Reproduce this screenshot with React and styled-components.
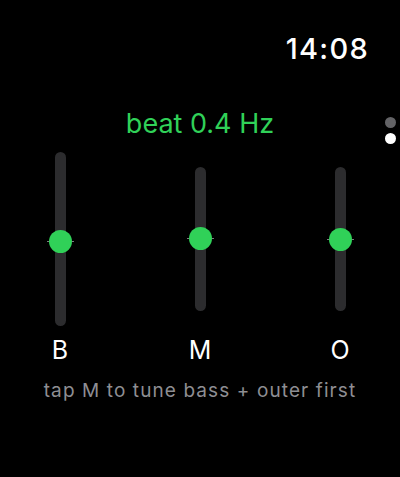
import React from "react";
import styled, { createGlobalStyle } from "styled-components";

const Global = createGlobalStyle`
  html, body {
    margin: 0;
    padding: 0;
    background: #000000;
  }
  body {
    font-family: "Inter", "Roboto", sans-serif;
    -webkit-font-smoothing: antialiased;
  }
`;

const Screen = styled.div`
  position: relative;
  width: 400px;
  height: 477px;
  background: #000000;
  overflow: hidden;
  display: flex;
  flex-direction: column;
`;

const StatusBar = styled.div`
  display: flex;
  justify-content: flex-end;
  padding: 32px 31px 0 0;
  height: 40px;
`;

const Time = styled.div`
  font-size: 29px;
  font-weight: 500;
  line-height: 34px;
  color: #ffffff;
  letter-spacing: 1.3px;
`;

const Title = styled.div`
  margin-top: 37px;
  text-align: center;
  font-size: 27px;
  line-height: 30px;
  color: #30d158;
`;

const PageDots = styled.div`
  position: absolute;
  right: 4px;
  top: 117px;
  display: flex;
  flex-direction: column;
  gap: 5px;
`;

const Dot = styled.span`
  width: 11px;
  height: 11px;
  border-radius: 50%;
  background: ${(p) => (p.$active ? "#ffffff" : "#636366")};
`;

const Sliders = styled.div`
  margin-top: 13px;
  display: flex;
  justify-content: space-between;
  padding: 0 40px;
`;

const Column = styled.div`
  width: 40px;
  display: flex;
  flex-direction: column;
  align-items: center;
`;

const TrackArea = styled.div`
  height: 174px;
  display: flex;
  align-items: center;
  justify-content: center;
`;

const Track = styled.div`
  position: relative;
  width: 11px;
  height: ${(p) => p.$height}px;
  border-radius: 6px;
  background: #2c2c2e;
`;

const Tick = styled.div`
  position: absolute;
  left: 50%;
  width: 27px;
  height: 1px;
  margin-left: -13.5px;
  background: #7c7c80;
`;

const Thumb = styled.div`
  position: absolute;
  left: 50%;
  width: 23px;
  height: 23px;
  margin: -11.5px 0 0 -11.5px;
  border-radius: 50%;
  background: #30d158;
`;

const Label = styled.div`
  margin-top: 10px;
  font-size: 25px;
  line-height: 28px;
  color: #ffffff;
`;

const Hint = styled.div`
  margin-top: 16px;
  text-align: center;
  font-size: 19px;
  line-height: 22px;
  color: #8e8e93;
  letter-spacing: 1.1px;
`;

const sliders = [
  { label: "B", height: 174, thumb: 89 },
  { label: "M", height: 144, thumb: 71 },
  { label: "O", height: 144, thumb: 72 },
];

export default function App() {
  return (
    <Screen>
      <Global />
      <StatusBar>
        <Time>14:08</Time>
      </StatusBar>
      <Title>beat 0.4 Hz</Title>
      <PageDots>
        <Dot />
        <Dot $active />
      </PageDots>
      <Sliders>
        {sliders.map((s) => (
          <Column key={s.label}>
            <TrackArea>
              <Track $height={s.height}>
                <Tick style={{ top: s.thumb }} />
                <Thumb style={{ top: s.thumb }} />
              </Track>
            </TrackArea>
            <Label>{s.label}</Label>
          </Column>
        ))}
      </Sliders>
      <Hint>tap M to tune bass + outer first</Hint>
    </Screen>
  );
}
